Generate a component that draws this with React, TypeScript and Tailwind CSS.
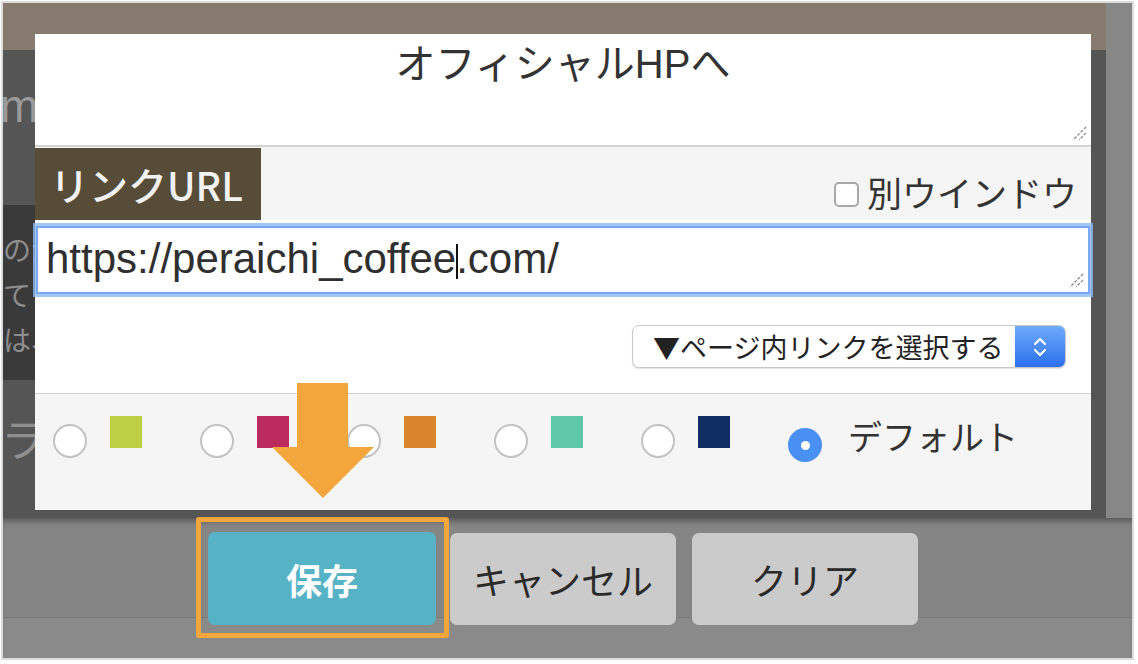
import React from "react";

const JP = "font-['Noto_Sans_CJK_JP',sans-serif]";
const LAT = "font-['Liberation_Sans','Noto_Sans_CJK_JP',sans-serif]";

function Grip() {
  return (
    <svg width="16" height="16" viewBox="0 0 16 16" className="absolute right-[4px] bottom-[4px]">
      <path d="M15 2 L2 15" stroke="#8a8a8a" strokeWidth="1.3" strokeDasharray="3 1.5" />
      <path d="M15 8 L8 15" stroke="#8a8a8a" strokeWidth="1.3" strokeDasharray="3 1.5" />
    </svg>
  );
}

const swatches = ["bg-[#bccf45]", "bg-[#bc2a5e]", "bg-[#d8852d]", "bg-[#5ec8a8]", "bg-[#102e64]"];

export default function App() {
  return (
    <div className={`relative w-[1138px] h-[664px] bg-white pl-[1px] pt-[1px] overflow-hidden ${JP}`}>
      <div className="w-[1133px] h-[659px] border-2 border-[#dcdcdc] flex flex-col">
        {/* top section */}
        <div className="flex h-[515px]">
          <div className="w-[1103px] flex flex-col">
            <div className="h-[31px] bg-[#867b6e]" />
            <div className="flex flex-1 bg-[#555555]">
              {/* left strip */}
              <div className="w-[32px] flex flex-col overflow-hidden text-[#8e8e8e]">
                <div className="h-[16px] bg-[#867b6e]" />
                <div className="h-[155px] bg-[#555555] pt-[33px] whitespace-nowrap">
                  <div className={`-ml-[3px] text-[46px] leading-none text-[#9a9a9a] ${LAT}`}>m</div>
                </div>
                <div className="h-[175px] bg-[#3a3a3a] pt-[22px] whitespace-nowrap text-[28px] leading-[45px]">
                  <div>のが</div>
                  <div>てく</div>
                  <div>は、</div>
                </div>
                <div className="flex-1 bg-[#555555] pt-[36px] whitespace-nowrap">
                  <div className="-ml-[2px] text-[44px] leading-none">ラ</div>
                </div>
              </div>

              {/* dialog */}
              <div className="w-[1056px] h-[476px] flex flex-col bg-[#f5f5f5]">
                <div className="relative h-[113px] bg-white border-b-2 border-[#d4d4d4] pt-[6px] text-center">
                  <div className={`text-[40px] leading-[48px] text-[#333] ${LAT}`}>オフィシャルHPへ</div>
                  <Grip />
                </div>

                <div className="h-[73px] flex items-end justify-between bg-[#f5f5f5]">
                  <div className="w-[226px] h-[72px] bg-[#564c38] flex items-center pl-[15px] text-[39px] leading-none font-medium text-[#f2f2f2]">
                    リンクURL
                  </div>
                  <div className="flex items-center pb-[7px] pr-[14px]">
                    <span className="block w-[25px] h-[25px] rounded-[5px] border-2 border-[#a8a8a8] bg-white mr-[8px] mt-[4px]" />
                    <span className="text-[35px] leading-[42px] text-[#333]">別ウインドウ</span>
                  </div>
                </div>

                <div className="h-[174px] bg-white border-b border-[#d2d2d2] pt-[6px] flex flex-col">
                  <div className="relative ml-[1px] w-[1054px] h-[68px] bg-white border-2 border-[#78a8f0] shadow-[0_0_0_3px_rgba(140,185,245,0.8)] flex items-center pl-[8px] pb-[2px]">
                    <span className={`text-[42px] leading-none text-[#2f2f2f] whitespace-nowrap ${LAT}`}>
                      https://peraichi_coffee
                      <span className="inline-block w-[2px] -mr-[2px] h-[35px] bg-[#111] align-[-6px]" />
                      .com/
                    </span>
                    <Grip />
                  </div>
                  <div className="flex justify-end pr-[25px] mt-[31px]">
                    <div className="w-[434px] h-[43px] flex rounded-[7px] border border-[#c9c9c9] bg-white shadow-[0_1px_1px_rgba(0,0,0,0.12)] overflow-hidden">
                      <div className="flex-1 flex items-center pl-[20px] text-[27px] leading-none text-[#222]">
                        ▼ページ内リンクを選択する
                      </div>
                      <div className="w-[50px] h-full bg-gradient-to-b from-[#6eabfb] to-[#2c6fee] flex items-center justify-center">
                        <svg width="16" height="26" viewBox="0 0 16 26">
                          <path d="M3 10 L8 5 L13 10" fill="none" stroke="white" strokeWidth="2.2" strokeLinecap="round" strokeLinejoin="round" />
                          <path d="M3 16 L8 21 L13 16" fill="none" stroke="white" strokeWidth="2.2" strokeLinecap="round" strokeLinejoin="round" />
                        </svg>
                      </div>
                    </div>
                  </div>
                </div>

                <div className="h-[115px] bg-[#f5f5f5] flex items-start pl-[18px]">
                  {swatches.map((c, i) => (
                    <div key={i} className="w-[147px] shrink-0 flex items-start">
                      <span className="block w-[34px] h-[34px] mt-[30px] rounded-full bg-white border-2 border-[#c2c2c2] shrink-0" />
                      <span className={`block ml-[23px] mt-[22px] w-[32px] h-[32px] ${c}`} />
                    </div>
                  ))}
                  <div className="flex items-start">
                    <span className="flex items-center justify-center w-[34px] h-[34px] mt-[34px] rounded-full bg-[#4a8ff2] shrink-0">
                      <span className="block w-[9px] h-[9px] rounded-full bg-white" />
                    </span>
                    <span className="ml-[26px] mt-[21px] text-[34px] leading-[41px] text-[#333]">デフォルト</span>
                  </div>
                </div>
              </div>

              {/* right dark strip */}
              <div className="flex-1 flex flex-col">
                <div className="h-[16px] bg-[#867b6e]" />
              </div>
            </div>
          </div>
          <div className="flex-1 bg-[#878787]" />
        </div>

        {/* bottom bar */}
        <div className="flex-1 bg-[linear-gradient(to_bottom,#858585_0px,#858585_99px,#7b7b7b_99px,#7b7b7b_100px,#8a8a8a_100px)] shadow-[inset_0_7px_6px_-4px_rgba(0,0,0,0.35)] flex items-start pl-[205px] pt-[14px]">
          <div className="relative">
            <span className="absolute -left-[12px] -right-[13px] -top-[15px] -bottom-[13px] border-[5px] border-[#f2a63b] rounded-[3px]" />
            <div className="w-[228px] h-[93px] rounded-[7px] bg-[#56b3c6] flex items-center justify-center text-[36px] font-bold text-white">
              保存
            </div>
          </div>
          <div className="ml-[14px] w-[226px] h-[92px] mt-[1px] rounded-[7px] bg-[#cbcbcb] flex items-center justify-center text-[36px] text-[#2a2a2a]">
            キャンセル
          </div>
          <div className="ml-[16px] w-[226px] h-[92px] mt-[1px] rounded-[7px] bg-[#cbcbcb] flex items-center justify-center text-[36px] text-[#2a2a2a]">
            クリア
          </div>
        </div>
      </div>

      {/* annotation arrow */}
      <svg className="absolute left-[272px] top-[383px]" width="102" height="115" viewBox="0 0 102 115">
        <polygon points="25,0 76,0 76,64 102,64 51,115 0,64 25,64" fill="#f2a63b" />
      </svg>
    </div>
  );
}
